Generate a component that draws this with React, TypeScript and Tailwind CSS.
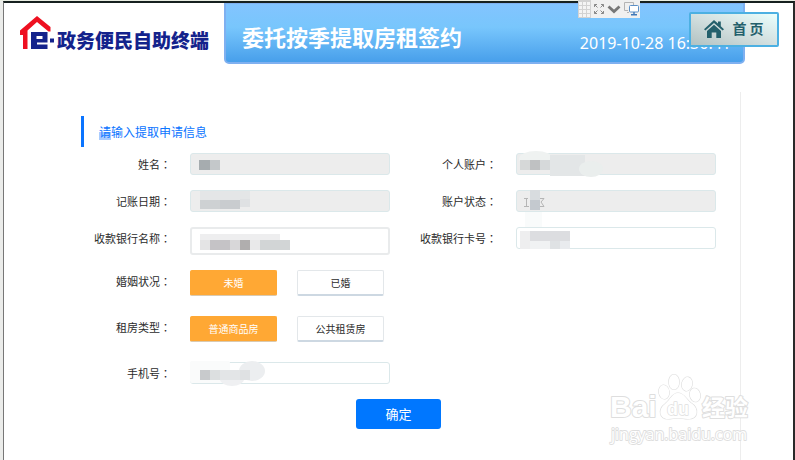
import type { ReactNode } from 'react';

type FieldProps = {
  id: string;
  label: string;
  readOnly?: boolean;
  tall?: boolean;
  children?: ReactNode;
};

const labelClass = 'w-[90px] shrink-0 text-right text-[11px] leading-[22px] text-[#2b2b2b] whitespace-nowrap';

function Colon() {
  return <span className="font-['Noto_Sans_CJK_TC',sans-serif]">：</span>;
}

function Field({ id, label, readOnly, tall, children }: FieldProps) {
  return (
    <div className="flex items-start gap-[19px]">
      <label htmlFor={id} className={labelClass}>
        {label}
        <Colon />
      </label>
      <div className="relative flex-1">
        <input
          id={id}
          type="text"
          readOnly={readOnly}
          className={`block w-full rounded-[3px] border px-2 text-[10px] outline-none ${tall ? 'h-7 border-2 border-[#e9ebec]' : 'h-[22px] border-[#dbe8ea]'} ${readOnly ? 'bg-[#ededed]' : 'bg-white'}`}
        />
        {/* masked personal data */}
        <svg className="pointer-events-none absolute left-0 top-0 overflow-visible" width="110" height="28" aria-hidden="true">
          {children}
        </svg>
      </div>
    </div>
  );
}

function Choice({ label, active }: { label: string; active?: boolean }) {
  return (
    <button
      type="button"
      aria-pressed={!!active}
      className={`h-[26px] w-[87px] rounded-[2px] border text-[10px] leading-none ${
        active
          ? 'border-[#ffa834] border-b-[#d9c9b0] bg-[#ffa834] text-white'
          : 'border-[#e3e7ea] border-b-2 border-b-[#cdd8e2] bg-white text-[#2b2b2b]'
      }`}
    >
      {label}
    </button>
  );
}

function ChoiceRow({ label, options }: { label: string; options: string[] }) {
  return (
    <div role="group" aria-label={label} className="flex items-start gap-[19px]">
      <span className={labelClass}>
        {label}
        <Colon />
      </span>
      <div className="flex gap-5">
        {options.map((option, i) => (
          <Choice key={option} label={option} active={i === 0} />
        ))}
      </div>
    </div>
  );
}

function Logo() {
  return (
    <div className="flex w-[220px] shrink-0 items-start pl-[15px] pt-[13px]">
      <svg className="shrink-0" width="38" height="36" viewBox="0 0 38 36" aria-hidden="true">
        <path d="M18 0 L31.5 11 V15.5 H29.5 L18 6 L8.5 14.5 V33 H4 V19 H1 V14.5 Z" fill="#ee1020" />
        <path
          d="M12 16 H28.5 V26.5 H18 V28.5 H28.5 V33 H12 Z M17.5 20 V23 H23.5 V20 Z"
          fillRule="evenodd"
          fill="#14238c"
        />
        <rect x="31" y="22.5" width="4" height="4" fill="#14238c" />
      </svg>
      <span className="whitespace-nowrap pt-3 text-[19px] font-black leading-6 text-[#14238c]">政务便民自助终端</span>
    </div>
  );
}

function Toolbar() {
  return (
    <div className="absolute right-[153px] top-[-3px] flex h-[18px] items-center gap-[3px] bg-[#f0f0f0] pr-px">
      <svg width="13" height="18" aria-hidden="true">
        <rect width="13" height="18" fill="#d2d2d2" />
        {[1, 5, 9].map((x) =>
          [2, 6, 10, 14].map((y) => <rect key={`${x}-${y}`} x={x} y={y} width="3" height="3" fill="#f4f4f4" />),
        )}
      </svg>
      <svg width="10" height="10" viewBox="0 0 10 10" fill="none" stroke="#8a8a8a" aria-hidden="true">
        <path d="M.5 3 V.5 H3 M7 .5 H9.5 V3 M9.5 7 V9.5 H7 M3 9.5 H.5 V7 M.5 .5 L3.5 3.5 M9.5 .5 L6.5 3.5 M9.5 9.5 L6.5 6.5 M.5 9.5 L3.5 6.5" />
      </svg>
      <svg width="14" height="9" viewBox="0 0 14 9" fill="none" stroke="#777" strokeWidth="2.8" aria-hidden="true">
        <path d="M1.5 1.5 L7 6.5 L12.5 1.5" />
      </svg>
      <svg width="15" height="14" viewBox="0 0 15 14" fill="none" aria-hidden="true">
        <path d="M4 8.5 H.5 V.5 H9.5 V3 M3 10.5 H5" stroke="#b4b4b4" />
        <rect x="5.5" y="3.5" width="9" height="6.5" rx="1" fill="#fff" stroke="#5b8fc7" />
        <path d="M10 10 V12.5 M7 12.8 H13" stroke="#3f78b8" strokeWidth="1.4" />
      </svg>
    </div>
  );
}

function Watermark() {
  return (
    <svg
      className="pointer-events-none absolute bottom-0 right-9 font-['Liberation_Sans',sans-serif]"
      width="150"
      height="90"
      viewBox="0 0 150 90"
      fill="#fff"
      stroke="#dedede"
      strokeWidth="2"
      strokeLinejoin="round"
      paintOrder="stroke"
      aria-hidden="true"
    >
      <text x="3" y="47" fontSize="30" fontWeight="700">Bai</text>
      <g strokeWidth="1.2">
        <ellipse cx="57" cy="22" rx="5.2" ry="7" transform="rotate(-8 57 22)" />
        <ellipse cx="67" cy="12" rx="5.2" ry="7.5" />
        <ellipse cx="80" cy="14" rx="5.2" ry="7" transform="rotate(12 80 14)" />
        <ellipse cx="88" cy="25" rx="5.2" ry="6.8" transform="rotate(-12 88 25)" />
        <path d="M71 23 C77 23 79 29 84 33 C92 38 92 49 81 49 C77 49 75 48 71 48 C67 48 65 49 61 49 C52 49 51 39 58 34 C64 29 65 23 71 23 Z" />
      </g>
      <text x="60" y="45" fontSize="18" fontWeight="700" strokeWidth="1.4">du</text>
      <text x="95" y="46" fontSize="23" fontWeight="700" className="font-['Noto_Sans_CJK_SC',sans-serif]">经验</text>
      <text x="4" y="70" fontSize="16" strokeWidth="1.8" className="font-['Open_Sans',sans-serif]">jingyan.baidu.com</text>
    </svg>
  );
}

export default function App() {
  return (
    <div className="flex min-h-screen flex-col border-t border-[#e9ede2] bg-[#ebecea] pl-[3px] font-['Noto_Sans_CJK_SC',sans-serif]">
      <div className="relative flex flex-1 flex-col border-l border-r-2 border-t-2 border-l-[#777] border-r-[#2a2a2a] border-t-[#16201f] bg-white">
        <header className="flex h-[61px] pr-12">
          <Logo />
          <div className="flex flex-1 items-center justify-between rounded-b-[5px] border-2 border-t border-[#7fb0f0] bg-linear-to-b from-[#82c4ff] via-[#78c6fc] via-40% to-[#479feb] pl-4 pr-3">
            <h1 className="pt-1.5 text-[22px] font-bold leading-8 text-white">委托按季提取房租签约</h1>
            <time className="pt-5 font-['Noto_Sans',sans-serif] text-[16px] leading-6 text-white">2019-10-28 16:36:41</time>
          </div>
        </header>
        <Toolbar />
        <button
          type="button"
          className="absolute right-[14px] top-[9px] flex h-[35px] w-[90px] items-center justify-center gap-2 rounded-[2px] border-2 border-[#4cb0e2] bg-linear-to-tr from-[#b2c2c2] via-[#d3e0e0] to-[#eafffd] pb-0.5 text-[14px] font-bold text-[#24606c]"
        >
          <svg width="20" height="18" viewBox="0 0 20 18" fill="#24606c" aria-hidden="true">
            <path d="M10 0 L14 3.6 V1.5 H16.8 V6.2 L20 9.2 L18.6 10.6 L10 2.9 L1.4 10.6 L0 9.2 Z" />
            <path d="M10 4.8 L17 11 V18 H12.3 V12.5 H7.7 V18 H3 V11 Z" />
          </svg>
          <span>首 页</span>
        </button>

        <main className="ml-[77px] mr-[52px] mt-7 flex-1 border-r border-[#ededed] pr-6 pt-6">
          <h2 className="h-[31px] border-l-[3px] border-[#0a74ff] pl-[15px] text-[12px] leading-[31px] text-[#0a74ff]">
            <span className="bg-linear-to-t from-[#a9ccff] from-50% to-transparent to-50%">请</span>输入提取申请信息
          </h2>

          <form>
            <div className="mt-1.5 grid grid-cols-2 gap-x-[17px] gap-y-[15px]">
              <Field id="name" label="姓名" readOnly>
                <rect x="9" y="7" width="11" height="10" fill="#a6acaf" />
                <rect x="20" y="7" width="10" height="10" fill="#c4c8ca" />
              </Field>
              <Field id="account" label="个人账户" readOnly>
                <ellipse cx="20" cy="6" rx="17" ry="8" fill="#eff2f1" />
                <rect x="34" y="2" width="35" height="21" fill="#e3e6e7" />
                <ellipse cx="75" cy="16" rx="12" ry="8" fill="#eaeeed" />
                <rect x="4" y="7" width="10" height="10" fill="#d6d8d8" />
                <rect x="14" y="7" width="10" height="10" fill="#bfc1c2" />
                <rect x="24" y="7" width="10" height="10" fill="#d6d9da" />
              </Field>
              <Field id="date" label="记账日期" readOnly>
                <rect x="10" y="1" width="50" height="9" fill="#e4e6e7" />
                <rect x="10" y="10" width="20" height="9" fill="#ced1d3" />
                <rect x="30" y="10" width="20" height="9" fill="#c9cccf" />
                <rect x="50" y="9" width="10" height="8" fill="#dfe1e3" />
              </Field>
              <Field id="status" label="账户状态" readOnly>
                <path d="M8 8.5 H12 M10.5 8.5 V16.5 M8 16.5 H13 M24 8.5 H28 L25 12 L28 16.5 H24" fill="none" stroke="#b5b5b5" />
                <rect x="14" y="0" width="10" height="10" fill="#d8dcdf" />
                <rect x="14" y="10" width="10" height="10" fill="#c4c9cf" />
                <rect x="9" y="22" width="17" height="16" fill="#f9fbfb" />
              </Field>
              <Field id="bank" label="收款银行名称" tall>
                <rect x="10" y="7" width="80" height="6" fill="#eeeeef" />
                <rect x="10" y="13" width="10" height="10" fill="#e4e4e5" />
                <rect x="20" y="13" width="20" height="10" fill="#c5c3c6" />
                <rect x="40" y="13" width="10" height="10" fill="#d8d7d9" />
                <rect x="50" y="13" width="10" height="10" fill="#b0aeae" />
                <rect x="60" y="13" width="10" height="10" fill="#e9e9ea" />
                <rect x="70" y="13" width="30" height="10" fill="#d2d5d6" />
              </Field>
              <Field id="card" label="收款银行卡号">
                <rect x="4" y="4" width="10" height="18" fill="#eeeeef" />
                <rect x="14" y="4" width="40" height="10" fill="#dcdde0" />
                <rect x="14" y="14" width="20" height="8" fill="#f0f2f3" />
                <rect x="34" y="14" width="10" height="8" fill="#dfe2e4" />
                <rect x="44" y="14" width="10" height="8" fill="#e9ebee" />
              </Field>
            </div>

            <div className="mt-[15px] flex flex-col gap-5">
              <ChoiceRow label="婚姻状况" options={['未婚', '已婚']} />
              <ChoiceRow label="租房类型" options={['普通商品房', '公共租赁房']} />
              <div className="grid grid-cols-2 gap-x-[17px]">
                <Field id="phone" label="手机号">
                  <rect x="0" y="-1" width="40" height="22" rx="2" fill="#fafbfb" />
                  <ellipse cx="62" cy="9" rx="13" ry="10" fill="#eceef0" />
                  <ellipse cx="42" cy="17" rx="12" ry="7" fill="#eff0f2" />
                  <rect x="10" y="8" width="10" height="10" fill="#c8cacc" />
                  <rect x="20" y="8" width="10" height="10" fill="#dcdfe0" />
                  <rect x="30" y="8" width="20" height="10" fill="#e3e5e7" />
                  <rect x="50" y="8" width="10" height="10" fill="#dfe1e3" />
                </Field>
              </div>
            </div>

            <div className="mt-[15px] flex justify-center">
              <button type="button" className="h-[30px] w-[85px] rounded-[3px] bg-[#0077ff] text-[13px] text-white">
                确定
              </button>
            </div>
          </form>
        </main>
        <Watermark />
      </div>
    </div>
  );
}
